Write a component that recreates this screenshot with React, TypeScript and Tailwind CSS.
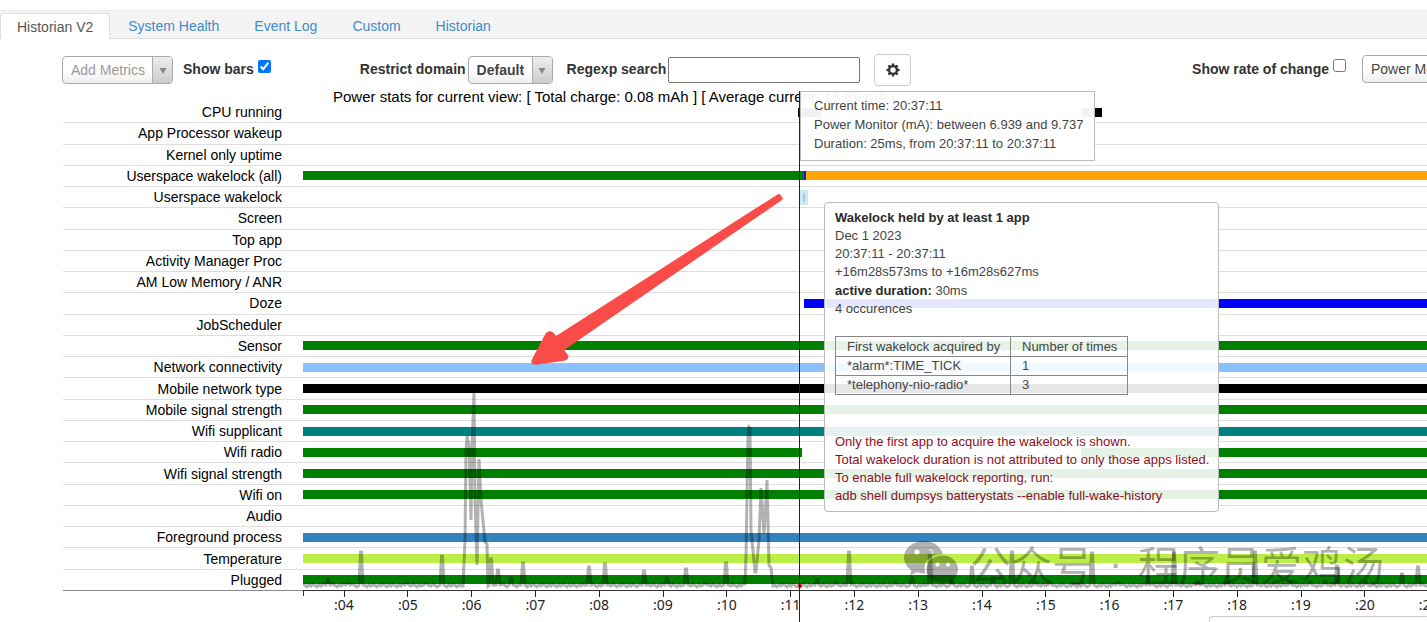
import React from "react";

const TRACK_UNITS = 1124;
const FIRST_UNIT = 303;

const pct = (units: number) => `${(units / TRACK_UNITS) * 100}%`;

type Segment = { color: string; from: number; to: number };
type Metric = { name: string; segments: Segment[] };

const END = FIRST_UNIT + TRACK_UNITS;
const full = (color: string): Segment[] => [{ color, from: FIRST_UNIT, to: END }];

const metrics: Metric[] = [
  {
    name: "CPU running",
    segments: [
      { color: "bg-black", from: 798, to: 821 },
      { color: "bg-black", from: 1081, to: 1102 },
    ],
  },
  { name: "App Processor wakeup", segments: [] },
  { name: "Kernel only uptime", segments: [] },
  {
    name: "Userspace wakelock (all)",
    segments: [
      { color: "bg-[#008000]", from: FIRST_UNIT, to: 804 },
      { color: "bg-[#1a1ae6]", from: 804, to: 806 },
      { color: "bg-[#ffa500]", from: 806, to: END },
    ],
  },
  {
    name: "Userspace wakelock",
    segments: [{ color: "bg-[#9fd0e8] ring-[3px] ring-[#cfe8f5]", from: 803, to: 805 }],
  },
  { name: "Screen", segments: [] },
  { name: "Top app", segments: [] },
  { name: "Activity Manager Proc", segments: [] },
  { name: "AM Low Memory / ANR", segments: [] },
  { name: "Doze", segments: [{ color: "bg-[#0000ff]", from: 804, to: END }] },
  { name: "JobScheduler", segments: [] },
  { name: "Sensor", segments: full("bg-[#008000]") },
  { name: "Network connectivity", segments: full("bg-[#8ac1ff]") },
  { name: "Mobile network type", segments: full("bg-black") },
  { name: "Mobile signal strength", segments: full("bg-[#008000]") },
  { name: "Wifi supplicant", segments: full("bg-[#008080]") },
  {
    name: "Wifi radio",
    segments: [
      { color: "bg-[#008000]", from: FIRST_UNIT, to: 802 },
      { color: "bg-[#008000]", from: 1081, to: END },
    ],
  },
  { name: "Wifi signal strength", segments: full("bg-[#008000]") },
  { name: "Wifi on", segments: full("bg-[#008000]") },
  { name: "Audio", segments: [] },
  { name: "Foreground process", segments: full("bg-[#3182bd]") },
  { name: "Temperature", segments: full("bg-[#bbee47]") },
  { name: "Plugged", segments: full("bg-[#008000]") },
];

const ticks = Array.from({ length: 18 }, (_, i) => ({
  label: `:${String(i + 4).padStart(2, "0")}`,
  at: 41 + i * 63.8,
}));

/* Power monitor trace: a noisy floor, short spikes [x, top] and two bursts. */
const FLOOR = 586;
const spikes: [number, number][] = [
  [328, 579], [348, 583], [361, 552], [407, 583], [426, 583], [442, 556],
  [491, 559], [498, 570], [511, 578], [523, 563],
  [589, 567], [605, 564], [644, 571], [667, 578], [686, 569], [705, 583], [726, 563],
  [817, 580], [836, 582], [849, 552], [895, 582], [912, 578], [930, 552], [952, 580],
  [972, 567], [993, 578], [1012, 552], [1035, 582], [1050, 582], [1092, 553], [1118, 582],
  [1148, 577], [1174, 553], [1198, 582], [1227, 577], [1255, 552], [1290, 582],
  [1310, 582], [1325, 581], [1337, 566], [1366, 582], [1402, 574], [1418, 567],
];
const bursts: { from: number; to: number; points: [number, number][] }[] = [
  {
    from: 462,
    to: 488,
    points: [
      [463, 586], [465, 540], [466, 450], [467, 436], [469, 446], [471, 520], [472, 446],
      [474, 393], [475, 500], [477, 565], [479, 459], [481, 500], [485, 542], [487, 544], [488, 586],
    ],
  },
  {
    from: 744,
    to: 773,
    points: [
      [745, 584], [746, 555], [748, 434], [749, 427], [750, 428], [751, 530], [755, 572], [756, 572],
      [759, 540], [761, 488], [764, 534], [767, 480], [769, 565], [771, 568], [773, 586],
    ],
  },
];

function buildTrace() {
  const points: [number, number][] = [];
  const inBurst = (x: number) => bursts.some((b) => x >= b.from && x <= b.to);
  for (let x = FIRST_UNIT, i = 0; x <= END; x += 2, i += 1) {
    if (inBurst(x) || spikes.some(([s]) => Math.abs(s - x) < 4)) continue;
    points.push([x, FLOOR - 1 + ((i * 7) % 5) * 0.7 - 1]);
  }
  spikes.forEach(([x, top]) => {
    points.push([x - 2, FLOOR - 1], [x - 0.5, top], [x + 0.5, top], [x + 2, FLOOR - 1]);
  });
  bursts.forEach((b) => points.push(...b.points));
  points.sort((a, b) => a[0] - b[0]);
  return points.map(([x, y]) => `${x},${y}`).join(" ");
}

const trace = buildTrace();

function DropDown({
  id,
  label,
  options,
  className,
}: {
  id: string;
  label: string;
  options: string[];
  className: string;
}) {
  return (
    <span className="relative inline-flex h-7 shrink-0">
      <select
        id={id}
        aria-label={label}
        className={`h-7 appearance-none rounded border border-[#aaa] bg-linear-to-b from-white from-50% to-[#eee] pl-2 pr-5 text-sm ${className}`}
      >
        {options.map((o) => (
          <option key={o}>{o}</option>
        ))}
      </select>
      <span className="pointer-events-none absolute inset-y-px right-px flex w-5 items-center justify-center rounded-r-[3px] border-l border-[#aaa] bg-linear-to-b from-[#eee] to-[#ccc]">
        <svg viewBox="0 0 8 6" className="mt-0.5 h-1.5 w-2" aria-hidden="true">
          <path d="M0.5 0h7L4 6z" fill="#888" />
        </svg>
      </span>
    </span>
  );
}

function Cog() {
  return (
    <svg viewBox="0 0 24 24" className="size-3.5" aria-hidden="true">
      <circle cx="12" cy="12" r="6.6" fill="none" stroke="#333" strokeWidth="4" />
      {[0, 45, 90, 135, 180, 225, 270, 315].map((a) => (
        <path key={a} d="M9.600 5 10.300 0.800h3.400L14.400 5z" fill="#333" transform={`rotate(${a} 12 12)`} />
      ))}
    </svg>
  );
}

function Tabs() {
  const tabs = ["System Health", "Event Log", "Custom", "Historian"];
  return (
    <nav className="mt-2.5 flex h-[29px] shrink-0 items-end border-y border-t-[#e9e9e9] border-b-[#ddd] bg-[#f4f4f4] text-sm">
      <a
        href="#historian-v2"
        className="-mb-px flex h-[26px] items-center rounded-t border border-b-0 border-[#ddd] bg-white px-4 text-[#555]"
      >
        Historian V2
      </a>
      <div className="flex h-6 items-center gap-[35px] pl-[18px] text-[#428bca]">
        {tabs.map((t) => (
          <a key={t} href={`#${t.toLowerCase().replace(" ", "-")}`}>
            {t}
          </a>
        ))}
      </div>
    </nav>
  );
}

function Toolbar() {
  return (
    <form className="-mr-[100px] flex h-[52px] shrink-0 items-center pl-[62px] pt-2.5 text-sm font-bold text-[#333]">
      <DropDown
        id="metrics"
        label="Add Metrics"
        options={["Add Metrics"]}
        className="w-[111px] font-normal text-[#999]"
      />
      <label className="ml-2.5 flex items-start gap-1 pb-0.5 leading-5">
        Show bars
        <input type="checkbox" defaultChecked className="mt-px size-[13px] accent-[#0075ff]" />
      </label>
      <label htmlFor="domain" className="ml-[89px] pb-0.5 leading-5">
        Restrict domain
      </label>
      <span className="ml-0.5 flex">
        <DropDown id="domain" label="Restrict domain" options={["Default"]} className="w-[85px] font-bold text-[#444]" />
      </span>
      <label htmlFor="regexp" className="ml-[14px] pb-0.5 leading-5">
        Regexp search
      </label>
      <input id="regexp" type="text" className="ml-0.5 h-[26px] w-48 rounded-xs border border-[#767676] px-1 font-normal" />
      <button
        type="button"
        aria-label="Settings"
        className="ml-[14px] flex h-8 w-[37px] items-center justify-center rounded border border-[#ccc] bg-white"
      >
        <Cog />
      </button>
      <label className="ml-auto flex items-start gap-1 pb-0.5 leading-5">
        Show rate of change
        <input type="checkbox" className="size-[13px]" />
      </label>
      <span className="ml-4 flex pb-0.5 font-normal">
        <DropDown
          id="overlay"
          label="Overlay metric"
          options={["Power Monitor (mA)"]}
          className="w-[165px] text-[#444]"
        />
      </span>
    </form>
  );
}

function TimeTooltip() {
  return (
    <div
      className="absolute -top-[11px] h-[70px] w-[295px] border border-[#bbb] bg-white/95 pl-[13px] pt-1 text-[13px] leading-[19px] whitespace-nowrap text-[#444]"
      style={{ left: pct(497) }}
    >
      <p>Current time: 20:37:11</p>
      <p>Power Monitor (mA): between 6.939 and 9.737</p>
      <p>Duration: 25ms, from 20:37:11 to 20:37:11</p>
    </div>
  );
}

function WakelockTooltip() {
  const rows = [
    ["*alarm*:TIME_TICK", "1"],
    ["*telephony-nio-radio*", "3"],
  ];
  return (
    <div
      className="absolute top-[100px] w-[395px] rounded border border-[#bbb] bg-white/90 px-2.5 py-1.5 text-[13px] leading-[18px] whitespace-nowrap text-[#444]"
      style={{ left: pct(521) }}
    >
      <p className="font-bold text-[#2b2b2b]">Wakelock held by at least 1 app</p>
      <p>Dec 1 2023</p>
      <p>20:37:11 - 20:37:11</p>
      <p>+16m28s573ms to +16m28s627ms</p>
      <p className="pt-px">
        <b className="text-[#2b2b2b]">active duration:</b> 30ms
      </p>
      <p>4 occurences</p>
      <table className="mt-[18px] border-collapse border border-[#888]">
        <thead>
          <tr>
            <th className="h-5 w-[175px] border border-[#888] pl-[11px] text-left font-normal">
              First wakelock acquired by
            </th>
            <th className="w-[117px] border border-[#888] pl-[11px] text-left font-normal">Number of times</th>
          </tr>
        </thead>
        <tbody>
          {rows.map(([name, count]) => (
            <tr key={name}>
              <td className="border border-[#888] pl-[11px]">{name}</td>
              <td className="border border-[#888] pl-[11px]">{count}</td>
            </tr>
          ))}
        </tbody>
      </table>
      <div className="mt-[38px] text-[#8b0f1c]">
        <p>Only the first app to acquire the wakelock is shown.</p>
        <p>Total wakelock duration is not attributed to only those apps listed.</p>
        <p>To enable full wakelock reporting, run:</p>
        <p>adb shell dumpsys batterystats --enable full-wake-history</p>
      </div>
    </div>
  );
}

function Watermark() {
  return (
    <div
      className="pointer-events-none absolute top-[435px] flex h-[52px] items-center text-[41px] leading-none whitespace-nowrap text-black opacity-30 font-['Noto_Sans_CJK_SC',sans-serif]"
      style={{ left: pct(601) }}
    >
      <svg viewBox="0 0 54 46" className="h-[46px] w-[54px]" aria-hidden="true">
        <path
          fill="currentColor"
          fillRule="evenodd"
          d="M20 1C9 1 0 8.300 0 17.500c0 5.200 2.900 9.700 7.400 12.700L6 35.500l6.500-3.200c2.900.9 5.800 1.300 9.300 1-4.500-11.500 5-19.500 17.200-19C36.500 6 29 1 20 1zM13 9.500a2.500 2.500 0 1 1 0 5 2.500 2.500 0 0 1 0-5zm13.500 0a2.500 2.500 0 1 1 0 5 2.500 2.500 0 0 1 0-5z"
        />
        <path
          fill="currentColor"
          fillRule="evenodd"
          d="M38.500 15.500c-8.800 0-16 6-16 13.700s7.200 13.600 16 13.600c1.800 0 3.600-.3 5.300-.8l5.400 3-1.400-4.600c3.800-2.600 6.200-6.600 6.200-11.200 0-7.700-6.900-13.700-15.500-13.700zM33.500 22.500a2.100 2.100 0 1 1 0 4.200 2.100 2.100 0 0 1 0-4.200zm10.500 0a2.100 2.100 0 1 1 0 4.200 2.100 2.100 0 0 1 0-4.200z"
        />
      </svg>
      <span className="ml-3">公众号</span>
      <span className="w-[45px] text-center font-['Liberation_Sans',sans-serif]">·</span>
      <span>程序员爱鸡汤</span>
    </div>
  );
}

function Chart() {
  return (
    <section className="relative ml-[63px] shrink-0">
      <ul className="grid h-[489px] auto-rows-fr">
        {metrics.map((m) => (
          <li
            key={m.name}
            className="flex min-h-0 items-center border-b border-[#dedede] last:border-[#888]"
          >
            <span className="w-[219px] shrink-0 text-right text-sm leading-5 text-black">{m.name}</span>
            <div className="ml-[21px] flex h-[9px] min-w-0 flex-1">
              {m.segments.map((s, i) => {
                const previous = i === 0 ? FIRST_UNIT : m.segments[i - 1].to;
                return (
                  <div
                    key={s.from}
                    className={s.color}
                    style={{ width: pct(s.to - s.from), marginLeft: pct(s.from - previous) }}
                  />
                );
              })}
            </div>
          </li>
        ))}
      </ul>

      <div className="ml-60 h-[25px]">
        <div className="relative h-full">
          <span className="absolute -top-px left-0 h-1.5 w-full border-l border-t border-[#333]" />
          {ticks.map((t) => (
            <span
              key={t.label}
              className="absolute top-0 flex w-10 -translate-x-1/2 flex-col items-center text-sm leading-4 text-[#222] font-['Noto_Sans',sans-serif]"
              style={{ left: pct(t.at) }}
            >
              <span className="h-1.5 w-px bg-[#222]" />
              {t.label}
            </span>
          ))}
        </div>
      </div>

      <div className="absolute inset-y-0 left-60 right-0">
        <svg
          viewBox="303 102 1124 489"
          preserveAspectRatio="none"
          className="h-[489px] w-full"
          role="img"
          aria-label="Power Monitor (mA)"
        >
          <polyline points={trace} fill="none" stroke="#000" strokeOpacity="0.3" strokeWidth="3" />
          <circle cx="800" cy="586" r="2" fill="#e00000" />
        </svg>
        <TimeTooltip />
        <span
          className="absolute -top-[11px] -bottom-1.5 w-px bg-[#222]"
          style={{ left: pct(496.5) }}
        />
        <Watermark />
        <WakelockTooltip />
      </div>

      <svg
        viewBox="0 0 252 170"
        className="absolute left-[467px] top-[91px] h-[172px] w-[254px]"
        aria-hidden="true"
      >
        <path
          d="M250.500 4.500L248 0.800Q246.800 0.200 245.500 1.200L25.800 141.500L22.500 137.500Q18.500 135.500 15.500 139L1.500 165.500Q0.500 170 5.500 170L34 166.200Q39.500 164.500 37.500 160.500L34 155.500L250 6.500Q251.200 5.600 250.500 4.500z"
          fill="#f94b47"
        />
      </svg>
    </section>
  );
}

export default function App() {
  return (
    <main className="flex h-screen flex-col overflow-hidden bg-white font-['Liberation_Sans',Arial,sans-serif]">
      <Tabs />
      <Toolbar />
      <p className="shrink-0 pl-[333px] text-[15px] leading-[11px] whitespace-nowrap text-black">
        Power stats for current view: [ Total charge: 0.08 mAh ] [ Average current: 16.89 mA ]
      </p>
      <Chart />
      <aside className="ml-auto h-10 w-[218px] shrink-0 rounded-tl border-l border-t border-[#ccc]" />
    </main>
  );
}
